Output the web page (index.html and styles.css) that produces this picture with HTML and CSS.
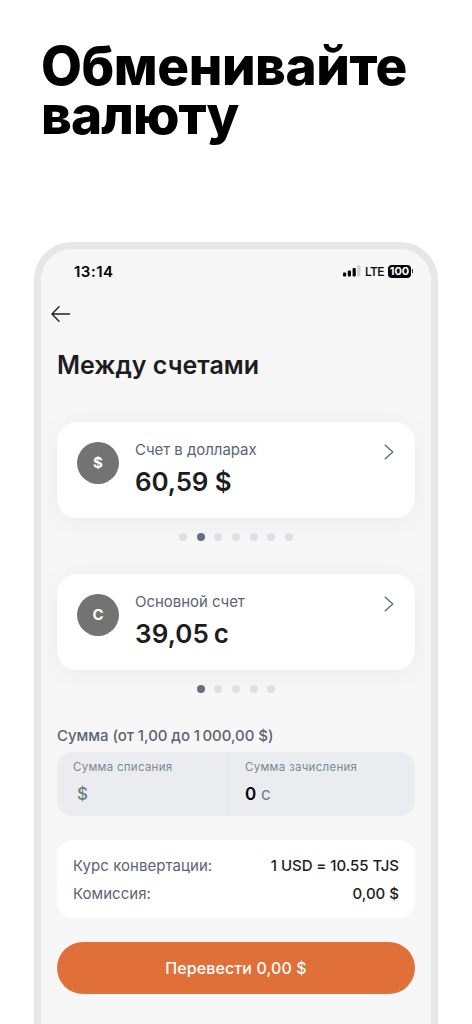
FILE: index.html
```html
<!DOCTYPE html>
<html lang="ru">
<head>
<meta charset="utf-8">
<title>Обменивайте валюту</title>
<link rel="stylesheet" href="styles.css">
</head>
<body>
<h1 class="headline"><span class="headline-first">Обменивайте</span><br><span class="headline-second">валюту</span></h1>
<main class="phone">
  <div class="status">
    <span class="time">13:14</span>
    <div class="indicators">
      <svg class="signal" width="18" height="12" viewBox="0 0 18 12"><rect x="0" y="7.6" width="3.2" height="4" rx="1"/><rect x="4.8" y="5.6" width="3.2" height="6" rx="1"/><rect x="9.6" y="3" width="3.2" height="8.6" rx="1"/><rect x="14.2" y="0.2" width="3.2" height="11.4" rx="1" fill="#cfcfcf"/></svg>
      <span class="network">LTE</span>
      <span class="battery">100</span>
      <span class="battery-tip"></span>
    </div>
  </div>
  <svg class="back" width="20" height="16" viewBox="0 0 20 16"><path d="M18.5 8H1M8 .8L1 8l7 7.2"/></svg>
  <h2 class="screen-title"><span>Между счетами</span></h2>

  <section class="account">
    <span class="coin">$</span>
    <div class="account-text">
      <div class="account-name">Счет в долларах</div>
      <div class="balance">60,59 $</div>
    </div>
    <svg class="chevron" width="10" height="16" viewBox="0 0 10 16"><path d="M1.2 1.2L8.8 8l-7.6 6.8"/></svg>
  </section>
  <div class="dots"><i></i><i class="active"></i><i></i><i></i><i></i><i></i><i></i></div>

  <section class="account">
    <span class="coin">С</span>
    <div class="account-text">
      <div class="account-name">Основной счет</div>
      <div class="balance balance-main">39,05 с</div>
    </div>
    <svg class="chevron" width="10" height="16" viewBox="0 0 10 16"><path d="M1.2 1.2L8.8 8l-7.6 6.8"/></svg>
  </section>
  <div class="dots"><i class="active"></i><i></i><i></i><i></i><i></i></div>

  <div class="amount-label">Сумма (от 1,00 до 1&#8198;000,00 $)</div>
  <div class="amounts">
    <div class="amount debit">
      <div class="caption">Сумма списания</div>
      <div class="value indent">$</div>
    </div>
    <div class="amount credit">
      <div class="caption">Сумма зачисления</div>
      <div class="value"><b>0</b> с</div>
    </div>
  </div>

  <div class="summary">
    <div class="row"><span class="key">Курс конвертации:</span><span class="rate">1 USD = 10.55 TJS</span></div>
    <div class="row"><span class="key">Комиссия:</span><span class="fee">0,00 $</span></div>
  </div>
  <button class="submit">Перевести 0,00 $</button>
</main>
</body>
</html>
```
FILE: styles.css
```css
* { box-sizing: border-box; }
body {
  margin: 0;
  height: 1024px;
  overflow: hidden;
  background: #fff;
  color: #1d1d1f;
  font-family: Inter, "Liberation Sans", sans-serif;
}
.headline {
  margin: 0;
  height: 242px;
  padding: 42px 0 0 41px;
  color: #000;
  font-size: 53px;
  line-height: 49px;
  font-weight: 800;
  letter-spacing: -0.45px;
  white-space: nowrap;
}
.headline-second { letter-spacing: -0.9px; }
.phone {
  width: 404px;
  height: 830px;
  margin-left: 34px;
  padding: 0 16px;
  border: 7px solid #e7e7e7;
  border-radius: 38px 38px 0 0;
  background: #f7f7f7;
  overflow: hidden;
}
.status {
  display: flex;
  justify-content: space-between;
  align-items: center;
  height: 44px;
  padding: 0 2px 0 17px;
}
.time { font-size: 15px; font-weight: 600; color: #000; letter-spacing: .5px; }
.indicators { display: flex; align-items: center; height: 14px; color: #000; }
.network { margin-left: 4px; font-size: 12px; font-weight: 500; letter-spacing: -0.6px; }
.battery {
  width: 23px;
  height: 13px;
  margin-left: 4px;
  border-radius: 4px;
  background: #000;
  color: #fff;
  font-size: 11px;
  line-height: 13px;
  font-weight: 700;
  text-align: center;
}
.battery-tip { width: 1px; height: 4px; margin-left: 1px; background: #333; }
.back { display: block; margin: 13px 0 0 -6px; fill: none; stroke: #222; stroke-width: 1.4; stroke-linecap: round; stroke-linejoin: round; }
.screen-title { margin: 27px 0 0; height: 32px; font-size: 25px; line-height: 32px; font-weight: 600; white-space: nowrap; }
.account {
  display: flex;
  height: 96px;
  margin-top: 41px;
  padding: 20px;
  border-radius: 20px;
  background: #fff;
  box-shadow: 0 4px 28px rgba(0, 0, 0, .055);
}
.coin {
  width: 42px;
  height: 42px;
  border-radius: 50%;
  background: #737373;
  color: #fff;
  font-size: 15px;
  line-height: 42px;
  font-weight: 700;
  text-align: center;
}
.account-text { flex: 1; margin-left: 16px; white-space: nowrap; }
.account-name { height: 16px; font-size: 15px; line-height: 16px; color: #5b6472; letter-spacing: -0.05px; }
.balance { margin-top: 6px; font-size: 26px; line-height: 36px; font-weight: 600; letter-spacing: -0.15px; }
.balance-main { letter-spacing: .1px; word-spacing: -2px; }
.chevron { margin: 2px 1px 0 0; fill: none; stroke: #66707d; stroke-width: 1.5; stroke-linecap: round; stroke-linejoin: round; }
.dots { display: flex; justify-content: center; gap: 9.7px; height: 8px; margin: 15px 0 0; }
.dots i { width: 8px; height: 8px; border-radius: 50%; background: #dfe0e5; }
.dots .active { background: #667080; }
.dots + .account { margin-top: 33px; }
.amount-label { height: 20px; margin-top: 33px; font-size: 15px; line-height: 20px; font-weight: 500; color: #5b6472; letter-spacing: -0.05px; white-space: nowrap; }
.amounts { display: flex; height: 64px; margin-top: 6px; border-radius: 16px; background: #ebecf0; white-space: nowrap; }
.amount { padding: 8px 16px; }
.debit { width: 172px; border-right: 1px solid #e0e2e6; }
.caption { font-size: 11.5px; line-height: 15px; color: #7f8793; letter-spacing: .28px; }
.value { margin-top: 8px; font-size: 17px; line-height: 22px; color: #717a87; }
.value b { color: #000; font-weight: 600; }
.indent { padding-left: 4px; font-weight: 500; }
.summary { height: 78px; margin-top: 24px; padding: 12px 16px; border-radius: 16px; background: #fff; }
.row { display: flex; justify-content: space-between; height: 28px; font-size: 15px; line-height: 28px; font-weight: 500; white-space: nowrap; }
.key { color: #5b6472; font-weight: 400; letter-spacing: .05px; }
.rate { letter-spacing: -0.05px; }
.submit {
  display: block;
  width: 100%;
  height: 52px;
  margin-top: 24px;
  padding: 0;
  border: 0;
  border-radius: 26px;
  background: #e16f39;
  color: #fff;
  font-family: inherit;
  font-size: 16px;
  font-weight: 500;
  letter-spacing: .12px;
}
```
